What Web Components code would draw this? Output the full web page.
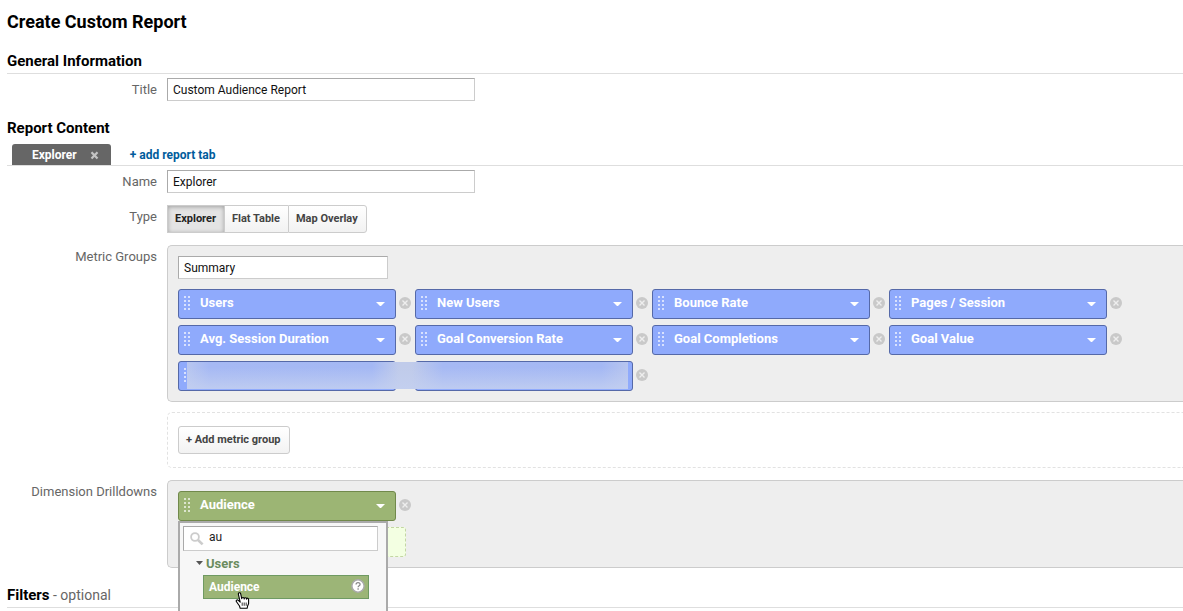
<!DOCTYPE html>
<html lang="en">
<head>
<meta charset="utf-8">
<title>Create Custom Report</title>
<style>
  body {
    margin: 0;
    padding-left: 7px;
    overflow-x: hidden;
    background: #fff;
    color: #000;
    font-family: Roboto, "Liberation Sans", sans-serif;
    font-size: 13px;
  }

  h1 {
    margin: 0 0 4px;
    font-size: 18px;
    line-height: 44px;
    font-weight: 700;
  }
</style>
</head>
<body>
  <h1>Create Custom Report</h1>

  <report-section heading="General Information">
    <form-row label="Title"><text-field label="Title" value="Custom Audience Report"></text-field></form-row>
  </report-section>

  <report-section heading="Report Content">
    <report-tabs slot="tabs" name="Explorer"></report-tabs>
    <form-row label="Name"><text-field label="Name" value="Explorer"></text-field></form-row>
    <form-row label="Type"><button-group options="Explorer,Flat Table,Map Overlay" selected="Explorer"></button-group></form-row>
    <form-row label="Metric Groups">
      <group-panel>
        <text-field label="Group name" value="Summary" compact></text-field>
        <pill-list>
          <field-pill name="Users"></field-pill>
          <field-pill name="New Users"></field-pill>
          <field-pill name="Bounce Rate"></field-pill>
          <field-pill name="Pages / Session"></field-pill>
          <field-pill name="Avg. Session Duration"></field-pill>
          <field-pill name="Goal Conversion Rate"></field-pill>
          <field-pill name="Goal Completions"></field-pill>
          <field-pill name="Goal Value"></field-pill>
          <masked-pills>
            <field-pill></field-pill>
            <field-pill></field-pill>
          </masked-pills>
        </pill-list>
      </group-panel>
      <group-panel dashed><tool-button>+ Add metric group</tool-button></group-panel>
    </form-row>
    <form-row label="Dimension Drilldowns">
      <group-panel>
        <dimension-picker>
          <field-pill name="Audience" kind="dimension"></field-pill>
          <search-menu slot="menu" query="au" group="Users" item="Audience"></search-menu>
        </dimension-picker>
      </group-panel>
    </form-row>
  </report-section>

  <report-section heading="Filters" note="- optional"></report-section>

<script>
class ReportSection extends HTMLElement {
  connectedCallback() {
    const note = this.getAttribute("note");
    const hasTabs = this.querySelector("[slot=tabs]");

    this.attachShadow({ mode: "open" }).innerHTML = `
      <style>
        :host {
          display: block;
          margin-bottom: 14px;
        }
        header {
          border-bottom: 1px solid #dedede;
        }
        h2 {
          margin: 0;
          padding-top: 2px;
          font-size: 14px;
          line-height: 23px;
          font-weight: 400;
        }
        strong {
          font-size: 15px;
          font-weight: 700;
        }
        span {
          color: #666;
        }
        .body {
          display: flex;
          flex-direction: column;
          gap: 12px;
          padding-top: 4px;
        }
      </style>
      <header>
        <h2><strong>${this.getAttribute("heading")}</strong>${note ? ` <span>${note}</span>` : ""}</h2>
        ${hasTabs ? `<slot name="tabs"></slot>` : ""}
      </header>
      <div class="body"><slot></slot></div>
    `;
  }
}

class ReportTabs extends HTMLElement {
  connectedCallback() {
    this.attachShadow({ mode: "open" }).innerHTML = `
      <style>
        :host {
          display: flex;
          align-items: center;
          gap: 19px;
          padding: 4px 0 0 5px;
          font-size: 12px;
          font-weight: 700;
        }
        .tab {
          display: flex;
          align-items: center;
          gap: 13px;
          height: 21px;
          padding: 0 12px 0 20px;
          border-radius: 3px 3px 0 0;
          background: #666;
          color: #fff;
        }
        button {
          display: flex;
          padding: 0;
          border: 0;
          background: none;
          font: inherit;
          color: inherit;
        }
        .close {
          padding-top: 2px;
        }
        a {
          color: #005c9c;
          text-decoration: none;
        }
      </style>
      <div class="tab">
        <button>${this.getAttribute("name")}</button>
        <button class="close" aria-label="Close tab">
          <svg width="9" height="9" viewBox="0 0 9 9"><path d="M1.5 1.2l6 6.4M7.5 1.2l-6 6.4" stroke="#c4c4c4" stroke-width="2.2"/></svg>
        </button>
      </div>
      <a href="#">+ add report tab</a>
    `;
  }
}

class FormRow extends HTMLElement {
  connectedCallback() {
    this.attachShadow({ mode: "open" }).innerHTML = `
      <style>
        :host {
          display: grid;
          grid-template-columns: 150px minmax(0, 1fr);
          column-gap: 10px;
        }
        .label {
          color: #666;
          line-height: 23px;
          text-align: right;
        }
        .content {
          display: flex;
          flex-direction: column;
          align-items: stretch;
          gap: 10px;
        }
      </style>
      <label class="label" id="label">${this.getAttribute("label")}</label>
      <div class="content" role="group" aria-labelledby="label"><slot></slot></div>
    `;

    // The input sits in another shadow root, so "for" cannot reach it.
    this.shadowRoot.querySelector("label").addEventListener("click", () => {
      const field = this.querySelector("text-field");
      if (field) {
        field.shadowRoot.querySelector("input").focus();
      }
    });
  }
}

class TextField extends HTMLElement {
  connectedCallback() {
    this.attachShadow({ mode: "open" }).innerHTML = `
      <style>
        :host {
          display: flex;
        }
        input {
          box-sizing: border-box;
          width: 308px;
          height: 23px;
          padding: 0 5px;
          border: 1px solid #ccc;
          border-top-color: #aaa;
          border-left-color: #aaa;
          background: #fff;
          color: #111;
          font: 12px Roboto, sans-serif;
          outline: none;
        }
        :host([compact]) input {
          width: 210px;
        }
      </style>
      <input type="text" aria-label="${this.getAttribute("label")}" value="${this.getAttribute("value")}">
    `;
  }
}

class ButtonGroup extends HTMLElement {
  connectedCallback() {
    const selected = this.getAttribute("selected");
    const buttons = this.getAttribute("options").split(",")
      .map((name) => `<button aria-pressed="${name === selected}">${name}</button>`)
      .join("");

    this.attachShadow({ mode: "open" }).innerHTML = `
      <style>
        :host {
          display: flex;
        }
        button {
          height: 28px;
          padding: 0 8px 2px 7px;
          border: 1px solid #ccc;
          border-right-width: 0;
          background: linear-gradient(#fff, #f2f2f2);
          color: #444;
          font: 700 11px Roboto, sans-serif;
        }
        button:first-child {
          border-radius: 3px 0 0 3px;
        }
        button:last-child {
          border-right-width: 1px;
          border-radius: 0 3px 3px 0;
        }
        button[aria-pressed="true"] {
          background: #e4e4e4;
          box-shadow: inset 0 1px 4px rgba(0, 0, 0, 0.3);
          color: #222;
        }
      </style>
      ${buttons}
    `;
  }
}

class ToolButton extends HTMLElement {
  connectedCallback() {
    this.attachShadow({ mode: "open" }).innerHTML = `
      <style>
        :host {
          display: flex;
        }
        button {
          height: 28px;
          padding: 0 8px 2px 7px;
          border: 1px solid #ccc;
          border-radius: 3px;
          background: linear-gradient(#fff, #f2f2f2);
          color: #444;
          font: 700 11px Roboto, sans-serif;
        }
      </style>
      <button><slot></slot></button>
    `;
  }
}

class GroupPanel extends HTMLElement {
  connectedCallback() {
    this.attachShadow({ mode: "open" }).innerHTML = `
      <style>
        :host {
          display: flex;
          flex-direction: column;
          gap: 10px;
          padding: 10px 0 10px 10px;
          border: 1px solid #ccc;
          border-right: 0;
          border-radius: 5px 0 0 5px;
          background: #eee;
        }
        :host([dashed]) {
          padding: 13px 0 13px 10px;
          border-color: #e2e2e2;
          border-style: dashed;
          background: #fff;
        }
      </style>
      <slot></slot>
    `;
  }
}

class PillList extends HTMLElement {
  connectedCallback() {
    this.attachShadow({ mode: "open" }).innerHTML = `
      <style>
        :host {
          display: flex;
          flex-wrap: wrap;
          gap: 6px 4px;
        }
      </style>
      <slot></slot>
    `;
  }
}

class FieldPill extends HTMLElement {
  connectedCallback() {
    const name = this.getAttribute("name") || "";
    const dots = [0, 4, 8, 12]
      .map((y) => `<path d="M0 ${y}h2v2h-2zM4 ${y}h2v2h-2z"/>`)
      .join("");

    this.attachShadow({ mode: "open" }).innerHTML = `
      <style>
        :host {
          display: flex;
          align-items: center;
          gap: 3px;
          --fill: #8faafc;
          --line: #5569a8;
        }
        :host([kind="dimension"]) {
          --fill: #9cb574;
          --line: #71894b;
        }
        button {
          padding: 0;
          border: 0;
          background: none;
        }
        .pill {
          box-sizing: border-box;
          display: flex;
          align-items: center;
          gap: 10px;
          width: 218px;
          height: 30px;
          padding: 0 10px 2px 5px;
          border: 1px solid var(--line);
          border-radius: 3px;
          background: var(--fill);
          color: #fff;
          font: 700 13px Roboto, sans-serif;
          text-align: left;
        }
        .name {
          flex: 1;
          padding-bottom: 1px;
        }
        .caret {
          margin-top: 2px;
        }
        .remove {
          display: flex;
          padding-bottom: 2px;
        }
      </style>
      <button class="pill" aria-label="${name || "Field"}">
        <svg width="6" height="14" fill="#fff" fill-opacity="0.65">${dots}</svg>
        <span class="name">${name}</span>
        <svg class="caret" width="9" height="5"><path d="M0 0h9L5 4H4z" fill="#fff"/></svg>
      </button>
      <button class="remove" aria-label="Remove">
        <svg width="12" height="12" viewBox="0 0 12 12">
          <circle cx="6" cy="6" r="6" fill="#c9c9c9"/>
          <path d="M3.5 3.5l5 5M8.5 3.5l-5 5" stroke="#eee" stroke-width="1.4"/>
        </svg>
      </button>
    `;
  }
}

// Pair of pills whose names are hidden under a frosted strip.
class MaskedPills extends HTMLElement {
  connectedCallback() {
    this.attachShadow({ mode: "open" }).innerHTML = `
      <style>
        :host {
          position: relative;
          display: flex;
          gap: 4px;
        }
        .mask {
          position: absolute;
          inset: 1px 20px 2px 9px;
          background:
            linear-gradient(rgba(196, 208, 240, 0) 20%, rgba(196, 208, 240, 0.8)),
            linear-gradient(90deg, #b9c7f0, #a6b9f4 5%, #a4b8f4 42%, #c0cbea 48%, #c0cbea 51%, #a6b9f4 58%, #a4b8f4 94%, #b7c5ef);
        }
      </style>
      <slot></slot>
      <div class="mask"></div>
    `;
  }
}

class DimensionPicker extends HTMLElement {
  connectedCallback() {
    this.attachShadow({ mode: "open" }).innerHTML = `
      <style>
        :host {
          position: relative;
          display: flex;
          flex-direction: column;
          gap: 6px;
        }
        .drop {
          box-sizing: border-box;
          width: 218px;
          height: 30px;
          margin-left: 10px;
          border: 1px dashed #c3d6a4;
          border-radius: 3px;
          background: #f3ffe2;
        }
        .menu {
          position: absolute;
          top: 30px;
          left: 0;
        }
      </style>
      <slot></slot>
      <div class="drop"></div>
      <div class="menu"><slot name="menu"></slot></div>
    `;
  }
}

class SearchMenu extends HTMLElement {
  connectedCallback() {
    this.attachShadow({ mode: "open" }).innerHTML = `
      <style>
        :host {
          box-sizing: border-box;
          display: block;
          width: 210px;
          padding: 3px 8px 16px 3px;
          border: 2px solid #aaa;
          background: #f7f7f7;
        }
        .search {
          box-sizing: border-box;
          display: flex;
          align-items: center;
          gap: 5px;
          height: 25px;
          padding: 0 6px;
          border: 1px solid #ccc;
          border-top-color: #aaa;
          border-left-color: #aaa;
          background: #fff;
        }
        input {
          flex: 1;
          min-width: 0;
          padding: 0 0 3px;
          border: 0;
          background: none;
          color: #222;
          font: 12px Roboto, sans-serif;
          outline: none;
        }
        button {
          border: 0;
          background: none;
          font: 700 12px Roboto, sans-serif;
        }
        .group {
          display: flex;
          align-items: center;
          gap: 3px;
          height: 24px;
          padding: 0 0 0 13px;
          color: #6b8c60;
          font-size: 13px;
        }
        .item {
          position: relative;
          box-sizing: border-box;
          display: flex;
          align-items: center;
          justify-content: space-between;
          width: 166px;
          height: 24px;
          margin-left: 20px;
          padding: 0 3px 0 5px;
          border: 1px solid #6f9a62;
          background: #9cb577;
          color: #fff;
        }
        .help {
          margin-bottom: 2px;
        }
        .pointer {
          position: absolute;
          top: 16px;
          left: 31px;
        }
      </style>
      <label class="search">
        <svg width="14" height="14" viewBox="0 0 14 14" fill="none" stroke="#ccc">
          <circle cx="5" cy="5" r="3.9" stroke-width="1.8"/>
          <path d="M8 8l4.6 4.4" stroke-width="2.6"/>
        </svg>
        <input type="text" aria-label="Search dimensions" value="${this.getAttribute("query")}">
      </label>
      <button class="group">
        <svg width="7" height="4"><path d="M0 0h7L3.5 4z" fill="#555"/></svg>
        ${this.getAttribute("group")}
      </button>
      <button class="item">
        ${this.getAttribute("item")}
        <svg class="help" width="14" height="14" viewBox="0 0 13 13" fill="none">
          <circle cx="6.5" cy="6.5" r="5.7" fill="#fff" stroke="#aaa" stroke-width="1.4"/>
          <path d="M4.7 5.2c0-2.4 3.7-2.3 3.7-.2 0 1.3-1.8 1.3-1.8 2.7M6.6 8.7v1.3" stroke="#888" stroke-width="1.2"/>
        </svg>
        <svg class="pointer" width="15" height="17" viewBox="0 0 15 17">
          <path d="M5.2 10.2L3.3 8.3C2.2 7.3.6 8.4 1.5 9.7l3 4.3.7 2.3h6.9l.5-2.3 1-2.4V7.2c0-1.3-1.9-1.4-2-.1 0-1.7-2.3-1.8-2.4-.2 0-1.7-2.3-1.8-2.5-.2L5.7 1.8C5.3.1 3.1.6 3.4 2.3z" fill="#fff" stroke="#000" stroke-width="1.1" stroke-linejoin="round"/>
          <path d="M7.2 10.5v3.3M9.2 10.5v3.3M11.2 10.5v3.3" stroke="#000" stroke-width=".8"/>
        </svg>
      </button>
    `;
  }
}

customElements.define("report-section", ReportSection);
customElements.define("report-tabs", ReportTabs);
customElements.define("form-row", FormRow);
customElements.define("text-field", TextField);
customElements.define("button-group", ButtonGroup);
customElements.define("tool-button", ToolButton);
customElements.define("group-panel", GroupPanel);
customElements.define("pill-list", PillList);
customElements.define("field-pill", FieldPill);
customElements.define("masked-pills", MaskedPills);
customElements.define("dimension-picker", DimensionPicker);
customElements.define("search-menu", SearchMenu);
</script>
</body>
</html>
